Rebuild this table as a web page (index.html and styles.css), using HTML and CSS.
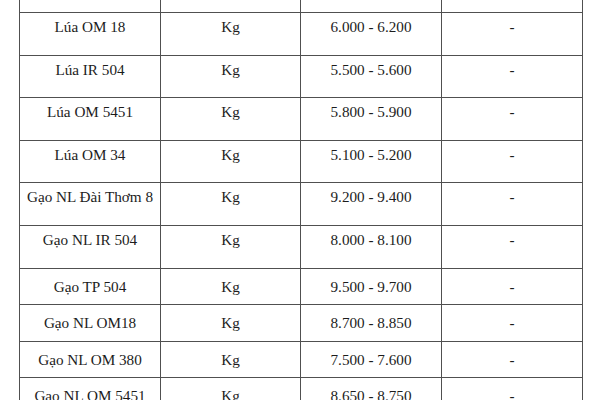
FILE: index.html
```html
<!DOCTYPE html>
<html lang="vi">
<head>
<meta charset="utf-8">
<title>Bảng giá lúa gạo</title>
<link rel="stylesheet" href="styles.css">
</head>
<body>
<table class="price-table">
  <colgroup>
    <col class="c1"><col class="c2"><col class="c3"><col class="c4">
  </colgroup>
  <tbody>
    <tr class="row-cut"><td></td><td></td><td></td><td></td></tr>
    <tr class="row-tall"><td>Lúa OM 18</td><td>Kg</td><td>6.000 - 6.200</td><td>-</td></tr>
    <tr class="row-tall"><td>Lúa IR 504</td><td>Kg</td><td>5.500 - 5.600</td><td>-</td></tr>
    <tr class="row-tall"><td>Lúa OM 5451</td><td>Kg</td><td>5.800 - 5.900</td><td>-</td></tr>
    <tr class="row-tall"><td>Lúa OM 34</td><td>Kg</td><td>5.100 - 5.200</td><td>-</td></tr>
    <tr class="row-tall"><td>Gạo NL Đài Thơm 8</td><td>Kg</td><td>9.200 - 9.400</td><td>-</td></tr>
    <tr class="row-tall"><td>Gạo NL IR 504</td><td>Kg</td><td>8.000 - 8.100</td><td>-</td></tr>
    <tr class="row-short"><td>Gạo TP 504</td><td>Kg</td><td>9.500 - 9.700</td><td>-</td></tr>
    <tr class="row-short"><td>Gạo NL OM18</td><td>Kg</td><td>8.700 - 8.850</td><td>-</td></tr>
    <tr class="row-short"><td>Gạo NL OM 380</td><td>Kg</td><td>7.500 - 7.600</td><td>-</td></tr>
    <tr class="row-short"><td>Gạo NL OM 5451</td><td>Kg</td><td>8.650 - 8.750</td><td>-</td></tr>
  </tbody>
</table>
</body>
</html>
```
FILE: styles.css
```css
html, body {
  margin: 0;
  padding: 0;
  background: #ffffff;
}

body {
  font-family: "Liberation Serif", "Times New Roman", serif;
  font-size: 15.2px;
  color: #1c1c1c;
  overflow: hidden;
  height: 400px;
}

.price-table {
  margin-left: 19px;
  border-collapse: collapse;
  table-layout: fixed;
  width: 564px;
}

.c1 { width: 141px; }
.c2 { width: 140px; }
.c3 { width: 141px; }
.c4 { width: 141px; }

.price-table td {
  border: 1px solid #505050;
  text-align: center;
  vertical-align: top;
  line-height: 17px;
  padding: 0;
  white-space: nowrap;
}

.row-cut td {
  border-top: none;
  height: 12px;
  padding: 0;
}

.row-tall td {
  padding-top: 5px;
  padding-bottom: 19.6px;
}

.row-short td {
  padding-top: 9px;
  padding-bottom: 9.5px;
}
```
